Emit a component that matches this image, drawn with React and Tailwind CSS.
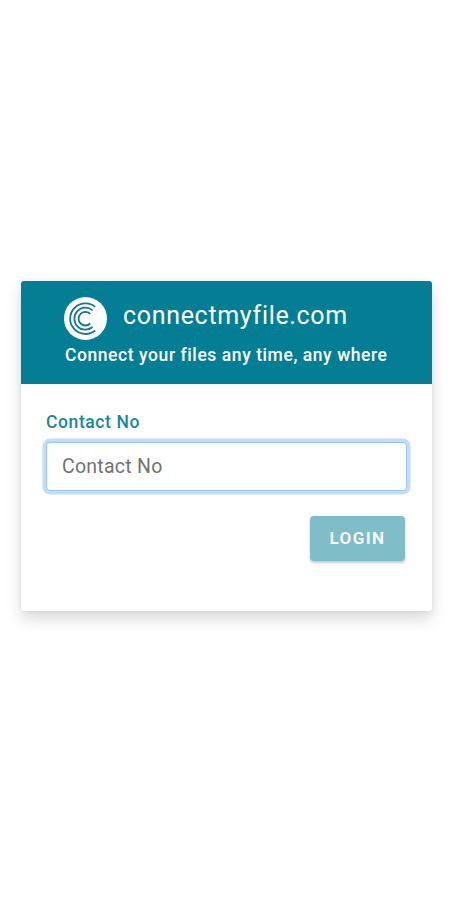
import { useState } from 'react';

function Logo() {
  return (
    <svg width="43" height="43" viewBox="0 0 43 43" fill="none" className="shrink-0">
      <circle cx="21.5" cy="21.5" r="21.5" fill="white" />
      <g stroke="#17778c" strokeWidth="1.8">
        <path d="M31.2 9.9A15.3 15.3 0 1 0 31.2 33.5" />
        <path d="M28.6 13.4A11 11 0 1 0 28.6 30" />
        <path d="M26.2 16.9A6.8 6.8 0 1 0 26.2 26.5" />
      </g>
    </svg>
  );
}

function App() {
  const [contact, setContact] = useState('');

  return (
    <div className="flex h-screen flex-col items-center overflow-hidden bg-white pt-[281px] font-['Roboto',sans-serif]">
      <div className="ml-px h-[330px] w-[411px] shrink-0 overflow-hidden rounded-[3px] bg-white shadow-[0_8px_16px_rgba(0,0,0,0.15),0_0_5px_rgba(0,0,0,0.06)]">
        <div className="h-[103px] bg-[#047e94] pt-4 text-white">
          <div className="flex h-[43px] pl-[43px]">
            <Logo />
            <h1 className="ml-4 pt-[3px] text-[25px] leading-[32px] tracking-[0.68px] whitespace-nowrap">
              connectmyfile.com
            </h1>
          </div>
          <p className="pt-1 pl-11 text-[17.5px] leading-[22px] font-medium tracking-[0.57px] whitespace-nowrap">
            Connect your files any time, any where
          </p>
        </div>

        <form className="px-[25px] pt-7" onSubmit={(e) => e.preventDefault()}>
          <label htmlFor="contact" className="block text-[17.5px] leading-5 font-medium tracking-[0.6px] text-[#17899a]">
            Contact No
          </label>
          <input
            id="contact"
            type="text"
            value={contact}
            onChange={(e) => setContact(e.target.value)}
            placeholder="Contact No"
            className="mt-[10px] block h-[49px] w-[361px] rounded-[4px] border border-[#99c5eb] bg-white px-[15px] text-[19.5px] tracking-[0.25px] text-gray-700 shadow-[0_0_0_3.5px_#c0defa] outline-none placeholder:text-[#6f7377]"
          />
          <div className="mt-[25px] flex justify-end pr-[2px]">
            <button
              type="submit"
              className="h-[45px] w-[95px] rounded-[4px] bg-[#7fbdc8] text-[17px] font-semibold tracking-[1.4px] text-white shadow-[0_2px_3px_rgba(0,0,0,0.22)]"
            >
              LOGIN
            </button>
          </div>
        </form>
      </div>
    </div>
  );
}

export default App;
